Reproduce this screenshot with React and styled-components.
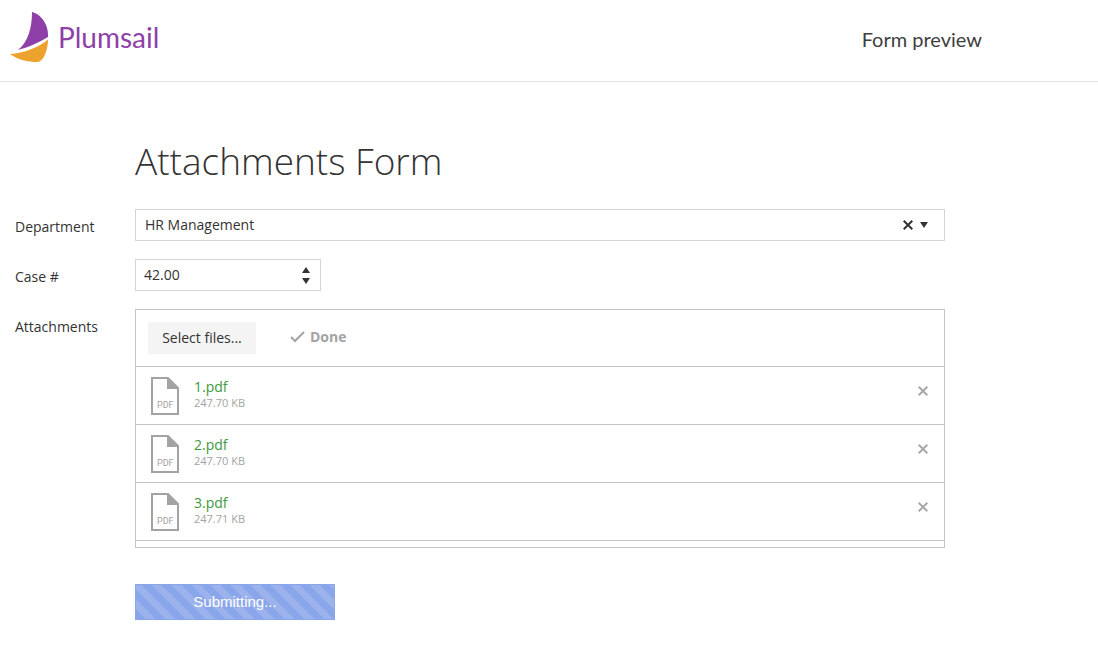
import React from "react";
import styled, { createGlobalStyle } from "styled-components";

const Global = createGlobalStyle`
  *, *::before, *::after { box-sizing: border-box; }
  body {
    margin: 0;
    background: #fff;
    color: #333;
    font-family: "Open Sans", "Noto Sans", sans-serif;
    font-size: 14px;
    line-height: 20px;
  }
  button, input, select { font: inherit; color: inherit; }
`;

const Header = styled.header`
  display: flex;
  align-items: center;
  justify-content: space-between;
  height: 82px;
  padding: 0 116px 0 10px;
  border-bottom: 1px solid #e4e4e4;
`;

const Brand = styled.a`
  display: flex;
  align-items: center;
  gap: 8px;
  padding-bottom: 8px;
  color: #8e3fa8;
  font-family: Lato, sans-serif;
  font-size: 28px;
  line-height: 32px;
  text-decoration: none;
`;

const PageName = styled.span`
  padding-bottom: 4px;
  color: #404040;
  font-family: Lato, sans-serif;
  font-size: 20px;
  line-height: 24px;
`;

const Form = styled.form`
  display: flex;
  flex-direction: column;
  gap: 18px;
  max-width: 945px;
  padding: 52px 0 39px 15px;
`;

const Title = styled.h1`
  margin: 0;
  padding: 0 0 3px 120px;
  font-size: 37px;
  font-weight: 300;
  line-height: 54px;
`;

const Row = styled.div`
  display: grid;
  grid-template-columns: 120px minmax(0, 1fr);
  align-items: start;
`;

const Label = styled.label`
  padding-top: 8px;
`;

const Field = styled.div`
  display: flex;
  align-items: center;
  width: ${(p) => p.$width || "100%"};
  height: 32px;
  padding-right: ${(p) => p.$end};
  border: 1px solid #d5d5d5;
`;

const Select = styled.select`
  flex: 1;
  min-width: 0;
  padding: 0 9px;
  border: 0;
  background: none;
  appearance: none;
`;

const NumberInput = styled.input`
  flex: 1;
  min-width: 0;
  padding: 0 8px;
  border: 0;
  background: none;
`;

const IconButton = styled.button`
  display: flex;
  padding: 0;
  border: 0;
  background: none;
  color: ${(p) => p.$color || "#333"};
  cursor: pointer;
`;

const Arrow = styled.span`
  display: flex;
  margin-left: 7px;
  pointer-events: none;
`;

const Spinner = styled.div`
  display: flex;
  flex-direction: column;
  gap: 5px;
`;

const Upload = styled.div`
  padding-bottom: 6px;
  border: 1px solid #c5c5c5;
`;

const UploadBar = styled.div`
  display: flex;
  align-items: center;
  gap: 34px;
  height: 57px;
  padding: 0 12px;
  border-bottom: 1px solid #c5c5c5;
`;

const SelectFiles = styled.button`
  width: 108px;
  height: 32px;
  padding: 0;
  border: 0;
  background: #f4f4f4;
`;

const Status = styled.strong`
  display: flex;
  align-items: center;
  gap: 5px;
  padding-bottom: 2px;
  color: #a3a3a3;
`;

const Files = styled.ul`
  margin: 0;
  padding: 0;
  list-style: none;
`;

const File = styled.li`
  display: flex;
  align-items: flex-start;
  height: 58px;
  padding: 10px 16px 0 15px;
  border-bottom: 1px solid #c5c5c5;
`;

const FileText = styled.div`
  flex: 1;
  padding-left: 15px;
`;

const FileName = styled.div`
  color: #3c9a3c;
  line-height: 20px;
`;

const FileSize = styled.div`
  color: #a3a3a3;
  font-size: 11px;
  line-height: 12px;
`;

const FileType = styled.svg`
  font-family: "Liberation Sans Narrow", Roboto, sans-serif;
  font-size: 9px;
`;

const Remove = styled(IconButton)`
  padding-top: 9px;
`;

const Submit = styled.button`
  width: 200px;
  height: 36px;
  margin: 18px 0 0 120px;
  padding: 0;
  border: 1px solid #8aa6ea;
  background: repeating-linear-gradient(45deg, #8aa6ea 0 7px, #9bb2ec 7px 14px);
  color: #fff;
  font-family: "Liberation Sans", Arial, sans-serif;
  font-size: 15px;
`;

const files = [
  { name: "1.pdf", size: "247.70 KB" },
  { name: "2.pdf", size: "247.70 KB" },
  { name: "3.pdf", size: "247.71 KB" },
];

function Logo() {
  return (
    <svg width="40" height="52" viewBox="0 0 40 52" aria-hidden="true">
      <path d="M22 1C31 3 39 14 38 26C30 31 19 36 8 39C18 31 22 17 22 1Z" fill="#8e3fa8" />
      <path d="M0 43C14 42 28 37 38 28.500C38 38 34 51 27 51C18 51 8 49 0 43Z" fill="#eda22d" />
    </svg>
  );
}

function Cross() {
  return (
    <svg width="10" height="10" viewBox="0 0 10 10" aria-hidden="true">
      <path d="M.7.7l8.6 8.6M9.300.7L.7 9.300" stroke="currentColor" strokeWidth="2" />
    </svg>
  );
}

function Triangle({ up }) {
  return (
    <svg width="8" height="6" viewBox="0 0 8 6" aria-hidden="true">
      <path d={up ? "M4 0L8 6H0Z" : "M0 0H8L4 6Z"} fill="currentColor" />
    </svg>
  );
}

function PdfIcon() {
  return (
    <FileType width="28" height="38" viewBox="0 0 28 38" aria-hidden="true">
      <path d="M1 1H17L27 11V37H1Z" fill="#fff" stroke="#a3a3a3" strokeWidth="2" />
      <path d="M16 0V12H28Z" fill="#a3a3a3" />
      <text x="6" y="31" fill="#a3a3a3">PDF</text>
    </FileType>
  );
}

export default function App() {
  return (
    <>
      <Global />
      <Header>
        <Brand href="#">
          <Logo />
          Plumsail
        </Brand>
        <PageName>Form preview</PageName>
      </Header>
      <Form onSubmit={(e) => e.preventDefault()}>
        <Title>Attachments Form</Title>
        <Row>
          <Label htmlFor="department">Department</Label>
          <Field $end="16px">
            <Select id="department" defaultValue="hr">
              <option value="hr">HR Management</option>
            </Select>
            <IconButton type="button" aria-label="Clear department">
              <Cross />
            </IconButton>
            <Arrow>
              <Triangle />
            </Arrow>
          </Field>
        </Row>
        <Row>
          <Label htmlFor="case">Case #</Label>
          <Field $width="186px" $end="10px">
            <NumberInput id="case" type="text" inputMode="decimal" defaultValue="42.00" />
            <Spinner>
              <IconButton type="button" aria-label="Increase">
                <Triangle up />
              </IconButton>
              <IconButton type="button" aria-label="Decrease">
                <Triangle />
              </IconButton>
            </Spinner>
          </Field>
        </Row>
        <Row>
          <Label htmlFor="attachments">Attachments</Label>
          <Upload>
            <UploadBar>
              <SelectFiles id="attachments" type="button">Select files...</SelectFiles>
              <Status>
                <svg width="15" height="12" viewBox="0 0 15 12" aria-hidden="true">
                  <path d="M1 6L5 10L14 1" fill="none" stroke="currentColor" strokeWidth="2" />
                </svg>
                Done
              </Status>
            </UploadBar>
            <Files>
              {files.map((file) => (
                <File key={file.name}>
                  <PdfIcon />
                  <FileText>
                    <FileName>{file.name}</FileName>
                    <FileSize>{file.size}</FileSize>
                  </FileText>
                  <Remove type="button" $color="#a8a8a8" aria-label={`Remove ${file.name}`}>
                    <Cross />
                  </Remove>
                </File>
              ))}
            </Files>
          </Upload>
        </Row>
        <Submit type="submit">Submitting...</Submit>
      </Form>
    </>
  );
}
